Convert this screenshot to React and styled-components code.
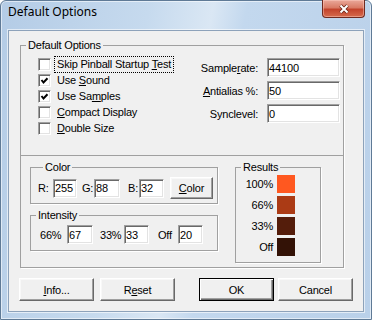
import React from "react";
import styled, { createGlobalStyle } from "styled-components";

const GlobalStyle = createGlobalStyle`
  html, body {
    margin: 0;
    padding: 0;
    background: #fff;
  }
`;

const Window = styled.div`
  box-sizing: border-box;
  width: 372px;
  height: 320px;
  display: flex;
  flex-direction: column;
  border: 1px solid #5f7a96;
  border-radius: 6px 6px 0 0;
  background: linear-gradient(100deg, #b4cce6 0%, #c6daee 35%, #dae7f4 50%, #c3d8ee 58%, #b9d0e9 100%);
  box-shadow: inset 0 0 0 1px rgba(255, 255, 255, 0.55);
  font-family: "Liberation Sans", Arial, sans-serif;
  font-size: 11px;
  letter-spacing: -0.2px;
  color: #000;
`;

const TitleBar = styled.div`
  flex-shrink: 0;
  height: 29px;
  display: flex;
  justify-content: space-between;
  align-items: flex-start;
  padding: 0 6px 0 7px;
`;

const Title = styled.span`
  font-family: "Segoe UI", "Noto Sans", sans-serif;
  font-size: 12px;
  line-height: 16px;
  letter-spacing: 0;
  padding-top: 3px;
`;

const CloseButton = styled.div`
  width: 43px;
  height: 18px;
  margin-top: -1px;
  box-sizing: border-box;
  display: flex;
  align-items: center;
  justify-content: center;
  border: 1px solid #6f2a20;
  border-top: none;
  border-radius: 0 0 4px 4px;
  background: linear-gradient(#eaa89a 0%, #d97b66 45%, #c3432c 55%, #d56a4c 100%);
  box-shadow: inset 0 0 0 1px rgba(255, 210, 200, 0.45);
`;

const Client = styled.div`
  flex: 1;
  margin: 0 7px 7px;
  border: 1px solid #8da2ba;
  background: #f0f0f0;
  padding-top: 8px;
  box-shadow: 0 0 0 1px rgba(255, 255, 255, 0.6);
`;

const Group = styled.fieldset`
  box-sizing: border-box;
  margin: 0;
  padding: 0;
  min-inline-size: 0;
  border: 1px solid #a0a0a0;
  box-shadow: 1px 1px 0 #fff;
`;

const MainGroup = styled(Group)`
  margin-left: 11px;
  width: 324px;
`;

const Legend = styled.legend`
  margin-left: 5px;
  padding: 0 2px;
  line-height: 13px;
`;

const TopSection = styled.div`
  box-sizing: border-box;
  height: 103px;
  padding: 4px 3px 0 17px;
  display: flex;
  justify-content: space-between;
  align-items: flex-start;
`;

const CheckList = styled.div`
  display: flex;
  flex-direction: column;
`;

const CheckRow = styled.div`
  height: 16px;
  display: flex;
  align-items: center;
`;

const sunken = `
  border: 1px solid;
  border-color: #a0a0a0 #fff #fff #a0a0a0;
  box-shadow: inset 1px 1px 0 #696969, inset -1px -1px 0 #e3e3e3;
  background: #fff;
`;

const Box = styled.span`
  box-sizing: border-box;
  width: 13px;
  height: 13px;
  margin-right: 4px;
  display: flex;
  align-items: center;
  justify-content: center;
  ${sunken}
`;

const CheckLabel = styled.span`
  padding: 0 2px;
  line-height: 15px;
  outline: ${(p) => (p.$focus ? "1px dotted #000" : "none")};
`;

const Key = styled.u`
  text-underline-offset: 1px;
`;

const SettingsGrid = styled.div`
  margin-top: 2px;
  display: grid;
  grid-template-columns: auto 73px;
  column-gap: 9px;
  row-gap: 4px;
  align-items: center;
  justify-items: end;
`;

const Input = styled.input`
  box-sizing: border-box;
  width: ${(p) => p.$w || 73}px;
  height: 19px;
  margin: 0;
  padding: 0 0 0 1px;
  font-family: "Liberation Sans", Arial, sans-serif;
  font-size: 11px;
  letter-spacing: -0.1px;
  color: #000;
  outline: none;
  ${sunken}
`;

const BottomSection = styled.div`
  box-sizing: border-box;
  height: 112px;
  border-top: 1px solid #a0a0a0;
  padding: 5px 0 0 9px;
  display: flex;
  align-items: flex-start;
`;

const LeftStack = styled.div`
  width: 188px;
  display: flex;
  flex-direction: column;
  gap: 5px;
`;

const SubGroup = styled(Group)`
  height: ${(p) => p.$h}px;
  padding: ${(p) => p.$pad};
`;

const Row = styled.div`
  display: flex;
  align-items: center;
`;

const FieldLabel = styled.span`
  width: ${(p) => p.$w}px;
  margin-left: ${(p) => p.$ml || 0}px;
  flex-shrink: 0;
`;

const ResultsGroup = styled(Group)`
  width: 86px;
  height: 102px;
  margin-left: 17px;
  padding: 1px 0 0 0;
`;

const ResultsGrid = styled.div`
  display: grid;
  grid-template-columns: 37px 18px;
  column-gap: 4px;
  row-gap: 3px;
  align-items: center;
`;

const ResultLabel = styled.span`
  text-align: right;
`;

const Swatch = styled.div`
  height: 18px;
  background: ${(p) => p.$color};
`;

const ButtonRow = styled.div`
  margin-top: 10px;
  padding-left: 10px;
  display: flex;
`;

const Button = styled.button`
  box-sizing: border-box;
  width: ${(p) => p.$w || 75}px;
  height: ${(p) => p.$h || 23}px;
  margin: 0 0 0 ${(p) => p.$ml || 0}px;
  padding: 0;
  font-family: "Liberation Sans", Arial, sans-serif;
  font-size: 11px;
  letter-spacing: -0.2px;
  color: #000;
  background: #f0f0f0;
  border: 1px solid;
  border-color: ${(p) => (p.$default ? "#000" : "#fff #696969 #696969 #fff")};
  box-shadow: ${(p) =>
    p.$default
      ? "inset 1px 1px 0 #fff, inset -1px -1px 0 #696969, inset -2px -2px 0 #a0a0a0"
      : "inset -1px -1px 0 #a0a0a0, inset 1px 1px 0 #f8f8f8"};
`;

const Check = () => (
  <svg width="9" height="9" viewBox="0 0 9 9">
    <polyline points="1.5,4 3.5,6.5 7.5,2.2" fill="none" stroke="#000" strokeWidth="2" />
  </svg>
);

const CloseGlyph = () => (
  <svg width="12" height="10" viewBox="0 0 12 10">
    <path d="M2.5 1.5 L9.5 8.5 M9.5 1.5 L2.5 8.5" stroke="#6a2417" strokeWidth="3.6" />
    <path d="M2.5 1.5 L9.5 8.5 M9.5 1.5 L2.5 8.5" stroke="#fff" strokeWidth="2" />
  </svg>
);

const options = [
  { pre: "Skip Pinball Startup ", key: "T", post: "est", on: false, focus: true },
  { pre: "Use ", key: "S", post: "ound", on: true },
  { pre: "Use Sa", key: "m", post: "ples", on: true },
  { pre: "", key: "C", post: "ompact Display", on: false },
  { pre: "", key: "D", post: "ouble Size", on: false },
];

const results = [
  { label: "100%", color: "#ff5820" },
  { label: "66%", color: "#ab3b15" },
  { label: "33%", color: "#541d0b" },
  { label: "Off", color: "#331206" },
];

const App = () => {
  return (
    <>
      <GlobalStyle />
      <Window>
        <TitleBar>
          <Title>Default Options</Title>
          <CloseButton>
            <CloseGlyph />
          </CloseButton>
        </TitleBar>
        <Client>
          <MainGroup>
            <Legend>Default Options</Legend>
            <TopSection>
              <CheckList>
                {options.map((o) => (
                  <CheckRow key={o.pre + o.post}>
                    <Box>{o.on && <Check />}</Box>
                    <CheckLabel $focus={o.focus}>
                      {o.pre}
                      <Key>{o.key}</Key>
                      {o.post}
                    </CheckLabel>
                  </CheckRow>
                ))}
              </CheckList>
              <SettingsGrid>
                <span>
                  Sample<Key>r</Key>ate:
                </span>
                <Input defaultValue="44100" />
                <span>
                  <Key>A</Key>ntialias %:
                </span>
                <Input defaultValue="50" />
                <span>Synclevel:</span>
                <Input defaultValue="0" />
              </SettingsGrid>
            </TopSection>
            <BottomSection>
              <LeftStack>
                <SubGroup $h={43} $pad="3px 0 0 7px">
                  <Legend>Color</Legend>
                  <Row>
                    <FieldLabel $w={15}>R:</FieldLabel>
                    <Input $w={24} defaultValue="255" />
                    <FieldLabel $w={12} $ml={5}>G:</FieldLabel>
                    <Input $w={26} defaultValue="88" />
                    <FieldLabel $w={11} $ml={8}>B:</FieldLabel>
                    <Input $w={25} defaultValue="32" />
                    <Button $w={43} $h={22} $ml={6}>
                      <Key>C</Key>olor
                    </Button>
                  </Row>
                </SubGroup>
                <SubGroup $h={42} $pad="3px 0 0 0">
                  <Legend>Intensity</Legend>
                  <Row>
                    <FieldLabel $w={27} $ml={9}>66%</FieldLabel>
                    <Input $w={26} defaultValue="67" />
                    <FieldLabel $w={24} $ml={7}>33%</FieldLabel>
                    <Input $w={25} defaultValue="33" />
                    <FieldLabel $w={20} $ml={9}>Off</FieldLabel>
                    <Input $w={25} defaultValue="20" />
                  </Row>
                </SubGroup>
              </LeftStack>
              <ResultsGroup>
                <Legend>Results</Legend>
                <ResultsGrid>
                  {results.map((r) => (
                    <React.Fragment key={r.label}>
                      <ResultLabel>{r.label}</ResultLabel>
                      <Swatch $color={r.color} />
                    </React.Fragment>
                  ))}
                </ResultsGrid>
              </ResultsGroup>
            </BottomSection>
          </MainGroup>
          <ButtonRow>
            <Button>
              <Key>I</Key>nfo...
            </Button>
            <Button $ml={6}>
              R<Key>e</Key>set
            </Button>
            <Button $ml={24} $default>
              OK
            </Button>
            <Button $ml={4}>Cancel</Button>
          </ButtonRow>
        </Client>
      </Window>
    </>
  );
};

export default App;
